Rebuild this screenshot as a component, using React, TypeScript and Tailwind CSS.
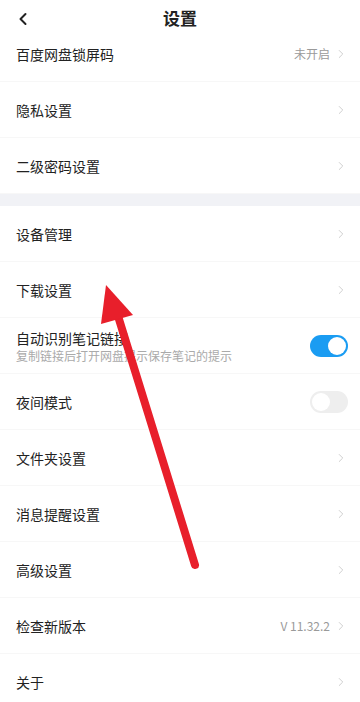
import { ChevronLeft, ChevronRight } from "lucide-react";

type Row = {
  label: string;
  value?: string;
  sub?: string;
  toggle?: "on" | "off";
};

const topRows: Row[] = [
  { label: "百度网盘锁屏码", value: "未开启" },
  { label: "隐私设置" },
  { label: "二级密码设置" },
];

const bottomRows: Row[] = [
  { label: "设备管理" },
  { label: "下载设置" },
  { label: "自动识别笔记链接", sub: "复制链接后打开网盘提示保存笔记的提示", toggle: "on" },
  { label: "夜间模式", toggle: "off" },
  { label: "文件夹设置" },
  { label: "消息提醒设置" },
  { label: "高级设置" },
  { label: "检查新版本", value: "V 11.32.2" },
  { label: "关于" },
];

function Toggle({ on }: { on: boolean }) {
  return (
    <div
      className={`flex h-[22px] w-[38px] items-center rounded-full px-[2px] ${on ? "justify-end bg-[#1a9cf2]" : "justify-start bg-[#eeeeee]"}`}
    >
      <div className="h-[18px] w-[18px] rounded-full bg-white" />
    </div>
  );
}

function SettingRow({ row }: { row: Row }) {
  return (
    <div className="flex h-[56px] items-center border-b border-[#f7f7f7] pl-4 pr-[12px]">
      <div className="flex flex-1 flex-col">
        <div className="text-[14px] leading-[20px] text-[#222222]">{row.label}</div>
        {row.sub && (
          <div className="text-[12px] leading-[16px] text-[#aaaaaa]">{row.sub}</div>
        )}
      </div>
      {row.toggle ? (
        <Toggle on={row.toggle === "on"} />
      ) : (
        <div className="flex items-center gap-[4px]">
          {row.value && (
            <span className="text-[12px] text-[#9a9a9a]">{row.value}</span>
          )}
          <ChevronRight size={14} strokeWidth={1.5} className="text-[#c8c8c8]" />
        </div>
      )}
    </div>
  );
}

export default function App() {
  return (
    <div
      className="relative h-[702px] w-[360px] overflow-hidden bg-white"
      style={{ fontFamily: '"Noto Sans CJK SC", "Noto Sans", sans-serif' }}
    >
      <div className="relative flex h-[26px] items-start justify-center pt-[6px]">
        <ChevronLeft
          size={20}
          strokeWidth={2.4}
          className="absolute left-[13px] top-[9px] text-[#222222]"
        />
        <span className="text-[17px] font-bold leading-[24px] text-[#222222]">设置</span>
      </div>
      {topRows.map((r) => (
        <SettingRow key={r.label} row={r} />
      ))}
      <div className="h-[12px] bg-[#f1f2f6]" />
      {bottomRows.map((r) => (
        <SettingRow key={r.label} row={r} />
      ))}
      <svg
        className="pointer-events-none absolute left-0 top-0"
        width="360"
        height="702"
        viewBox="0 0 360 702"
      >
        <line
          x1="118"
          y1="316"
          x2="195"
          y2="565"
          stroke="#e81f2b"
          strokeWidth="8"
          strokeLinecap="round"
        />
        <polygon points="106,285 101,324 133,315" fill="#e81f2b" />
      </svg>
    </div>
  );
}
